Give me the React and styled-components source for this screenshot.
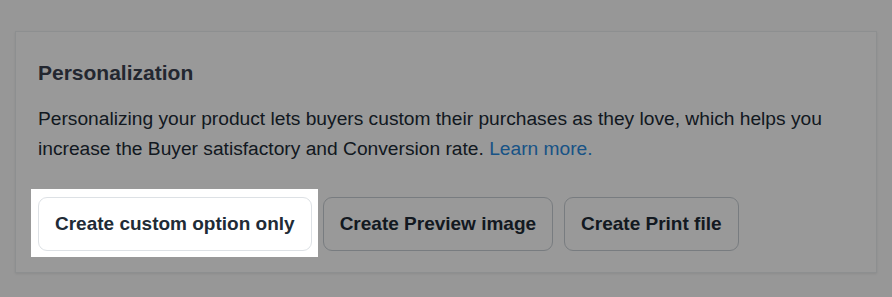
import React from "react";
import styled, { createGlobalStyle } from "styled-components";

const GlobalStyle = createGlobalStyle`
  html, body {
    margin: 0;
    padding: 0;
    background: #fcfcfc;
    font-family: "Liberation Sans", Arial, sans-serif;
    color: #212b36;
  }
`;

const Page = styled.div`
  width: 892px;
  height: 297px;
  box-sizing: border-box;
  padding: 31px 15px 24px;
  overflow: hidden;
`;

const Card = styled.section`
  background: #ffffff;
  border: 1px solid #eceef0;
  box-shadow: 0 1px 2px rgba(0, 0, 0, 0.08);
  padding: 28px 22px 22px;
  box-sizing: border-box;
  height: 242px;
`;

const Title = styled.h2`
  margin: 0;
  font-size: 21px;
  line-height: 26px;
  font-weight: 700;
  color: #3b4150;
`;

const Text = styled.p`
  margin: 18px 0 0;
  font-size: 19.2px;
  line-height: 30px;
  color: #212b36;
`;

const Link = styled.a`
  color: #2a8ae0;
  text-decoration: none;
`;

const Actions = styled.div`
  display: flex;
  align-items: center;
  gap: 11px;
  margin-top: 33px;
`;

const Spotlight = styled.div`
  position: relative;
  z-index: 2;
  margin: -8px -6px -6px -7px;
  padding: 8px 6px 6px 7px;
  background: #ffffff;
  box-shadow: 0 0 0 2000px rgba(0, 0, 0, 0.4);
`;

const Button = styled.button`
  height: 54px;
  padding: 0 16px;
  background: #ffffff;
  border: 1px solid ${(p) => (p.$active ? "#dde1e5" : "#c9cfd5")};
  border-radius: 9px;
  font-family: inherit;
  font-size: 19px;
  font-weight: 700;
  color: #212b36;
  cursor: pointer;
  display: block;
`;

export default function App() {
  return (
    <>
      <GlobalStyle />
      <Page>
        <Card>
          <Title>Personalization</Title>
          <Text>
            Personalizing your product lets buyers custom their purchases as
            they love, which helps you increase the Buyer satisfactory and
            Conversion rate. <Link href="#">Learn more.</Link>
          </Text>
          <Actions>
            <Spotlight>
              <Button $active type="button">
                Create custom option only
              </Button>
            </Spotlight>
            <Button type="button">Create Preview image</Button>
            <Button type="button">Create Print file</Button>
          </Actions>
        </Card>
      </Page>
    </>
  );
}
